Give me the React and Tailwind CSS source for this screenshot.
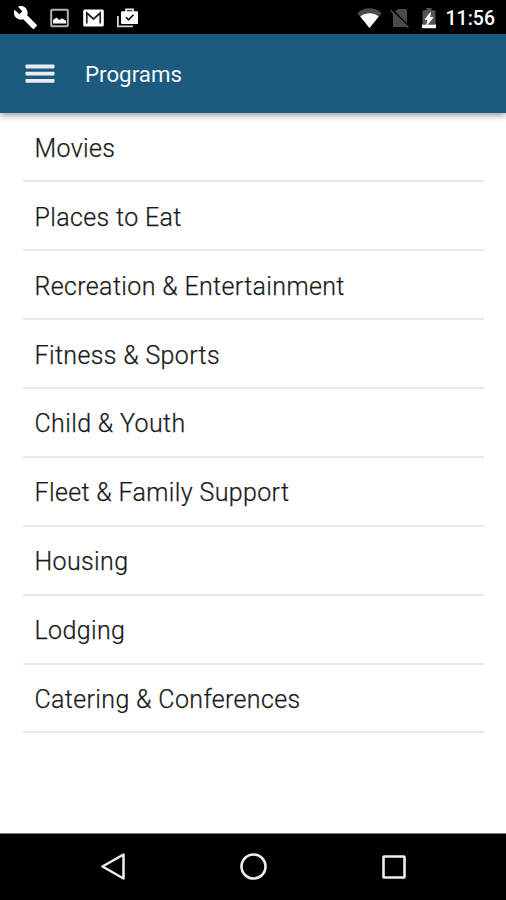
const programs = [
  'Movies',
  'Places to Eat',
  'Recreation & Entertainment',
  'Fitness & Sports',
  'Child & Youth',
  'Fleet & Family Support',
  'Housing',
  'Lodging',
  'Catering & Conferences',
];

function StatusBar() {
  return (
    <div className="flex h-[34px] shrink-0 items-center justify-between bg-black pt-px pr-[11px] pl-[14px] text-white">
      <div className="flex items-center">
        <svg className="h-[23px] w-[23px]" viewBox="1 1 22 22" fill="#fff">
          <path d="M22.7 19l-9.1-9.1c.9-2.3.4-5-1.5-6.9-2-2-5-2.4-7.4-1.3L9 6 6 9 1.6 4.7C.4 7.1.9 10.1 2.9 12.1c1.9 1.9 4.6 2.4 6.9 1.5l9.1 9.1c.4.4 1 .4 1.4 0l2.3-2.3c.5-.4.5-1.1.1-1.4z" />
        </svg>
        <svg className="ml-[13px] h-[20px] w-[19px]" viewBox="0 0 19 20" fill="none">
          <rect x="1.2" y="1.7" width="16.6" height="16.6" rx="1" stroke="#b5b5b5" strokeWidth="2" />
          <path d="M3 15.500V12l3.500-2.500 2.700 2.600 2.800-1.800 4 2.500V15.500z" fill="#fff" />
        </svg>
        <svg className="ml-[14px] h-[18px] w-[21px]" viewBox="0 0 21 18">
          <rect x="0.200" y="0.600" width="20.600" height="16.800" rx="1.500" fill="#fff" />
          <path d="M3.800 14.500V4l6.700 6 6.700-6v10.500" fill="none" stroke="#222" strokeWidth="1.700" />
        </svg>
        <svg className="ml-[13px] h-[22px] w-[21px]" viewBox="0 0 21 22">
          <path d="M0.900 9v10.300h15" fill="none" stroke="#d4d4d4" strokeWidth="1.800" />
          <path d="M9 5V2.300h7V5" fill="none" stroke="#eee" strokeWidth="1.700" />
          <rect x="4" y="4.300" width="17" height="12.700" rx="1" fill="#fff" />
          <path d="M9 10.300l2.500 2.600 5-5.200" fill="none" stroke="#111" strokeWidth="1.600" />
        </svg>
      </div>
      <div className="flex items-center">
        <svg className="h-[22px] w-[25px]" viewBox="0 0 25 22">
          <path d="M0.300 6.200C7-0.300 18-0.300 24.700 6.200L12.500 21z" fill="#4c4c4c" />
          <path d="M3.300 9.600c5.600-4.400 12.800-4.400 18.400 0L12.500 21z" fill="#fff" />
        </svg>
        <svg className="ml-[8px] h-[22px] w-[20px]" viewBox="0 0 20 22">
          <path d="M8 2h7.500q1.500 0 1.500 1.500V20H3V7z" fill="#4a4a4a" />
          <path d="M2 3.300l17 17" stroke="#000" strokeWidth="3" />
          <path d="M0.800 3.500l17.500 17" stroke="#555" strokeWidth="1.600" />
        </svg>
        <svg className="ml-[11px] h-[22px] w-[16px]" viewBox="0 0 16 22">
          <path d="M5.500 1h5v2.200H13q1.500 0 1.500 1.500V17h-13V4.700q0-1.500 1.500-1.500h2.500z" fill="#555" />
          <path d="M1 17.500h14v2.700q0 1-1 1H2q-1 0-1-1z" fill="#fff" />
          <path d="M9.500 5.500L4 12.500h3l-1.500 6 6.500-8H8.700z" fill="#fff" stroke="#fff" strokeWidth="0.800" />
        </svg>
        <span className="ml-[9px] pt-[2px] text-[19.500px] leading-none font-medium">11:56</span>
      </div>
    </div>
  );
}

function AppBar() {
  return (
    <header className="z-10 flex h-[79px] shrink-0 items-center bg-[#1c5a7e] pl-[25px] shadow-[0_2px_7px_rgba(0,0,0,0.42)]">
      <button className="flex w-[30px]" aria-label="Menu">
        <svg className="h-[19px] w-[30px]" viewBox="0 0 30 19" fill="#e8edf4">
          <rect x="0.500" y="0.500" width="29" height="3.900" rx="0.800" />
          <rect x="0.500" y="7.700" width="29" height="3.900" rx="0.800" />
          <rect x="0.500" y="14.900" width="29" height="3.900" rx="0.800" />
        </svg>
      </button>
      <h1 className="ml-[30px] pt-[2px] text-[22.300px] leading-none font-normal text-[#f4f7fc]">Programs</h1>
    </header>
  );
}

function NavBar() {
  return (
    <nav className="flex h-[67px] shrink-0 items-center justify-between border-t border-[#777] bg-black px-[99px]">
      <svg className="h-[30px] w-[28px]" viewBox="0 0 28 30" fill="none" stroke="#eee" strokeWidth="2.500" strokeLinejoin="round">
        <path d="M3.500 14.500L24.500 2.500v24z" />
      </svg>
      <svg className="h-[30px] w-[30px]" viewBox="0 0 30 30" fill="none" stroke="#eee" strokeWidth="2.600">
        <circle cx="15.500" cy="14.500" r="12" />
      </svg>
      <svg className="h-[30px] w-[28px]" viewBox="0 0 28 30" fill="none" stroke="#eee" strokeWidth="2.600" strokeLinejoin="round">
        <rect x="4.500" y="4.500" width="21" height="21" rx="0.500" />
      </svg>
    </nav>
  );
}

export default function App() {
  return (
    <div className="flex h-[900px] w-[506px] flex-col overflow-hidden bg-white font-[Roboto,sans-serif]">
      <StatusBar />
      <AppBar />
      <main className="flex-1 pr-[22px] pl-[23px]">
        <ul>
          {programs.map((name) => (
            <li key={name} className="flex h-[68.950px] items-center border-b-2 border-[#e9e9e9] pt-[4px] pl-[11.500px] text-[25px] font-light tracking-[0.360px] whitespace-nowrap text-[#1a1a1a] [-webkit-text-stroke:0.250px_#1a1a1a]">
              {name}
            </li>
          ))}
        </ul>
      </main>
      <NavBar />
    </div>
  );
}
